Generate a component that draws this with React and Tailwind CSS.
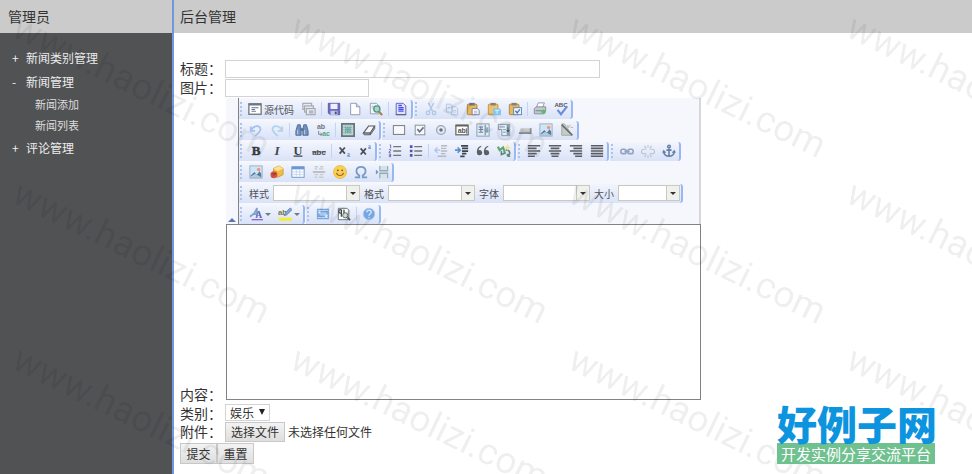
import React, { useState } from "react";

const icons = {
  source: (
    <>
      <rect x="1" y="2" width="14" height="12" fill="#fff" stroke="#70757f" strokeWidth="1.500" />
      <path d="M1 3h14" stroke="#70757f" strokeWidth="2" />
      <path d="M4 6.500h8M4 8.500h4M4 10.500h5" stroke="#69758f" strokeWidth="1.200" />
    </>
  ),
  templates: (
    <g fill="#e8eaf0" stroke="#a3a7b1" strokeWidth="1.300">
      <rect x="1" y="1.500" width="10" height="7" />
      <rect x="3" y="4.500" width="10" height="7" />
      <rect x="5" y="7.500" width="10" height="7" />
      <path d="M8 10.500h5M8 12.500h5" />
    </g>
  ),
  save: (
    <>
      <path d="M1.500 1.500h13v13h-11l-2-2z" fill="#6b6bc4" stroke="#5558a5" />
      <rect x="4" y="2" width="8" height="6" fill="#eef0ff" />
      <rect x="4" y="10" width="8" height="5" fill="#c6c9e2" />
      <rect x="9" y="11" width="2" height="3" fill="#44488c" />
    </>
  ),
  newPage: (
    <>
      <path d="M3 1.500h6.500l4 4v9H3z" fill="#fff" stroke="#8694a8" />
      <path d="M9.500 1.500v4h4" fill="#d4dced" stroke="#8694a8" />
    </>
  ),
  preview: (
    <>
      <path d="M1.500 1.500h7l3 3v9h-10z" fill="#f2f6fa" stroke="#8d9aad" />
      <path d="M3 5h5M3 7h4" stroke="#aab7c7" />
      <circle cx="9" cy="8" r="3.500" fill="#a6d9c5" stroke="#559581" strokeWidth="1.500" />
      <path d="m11.500 11 3.500 4" stroke="#aa8050" strokeWidth="2.500" />
    </>
  ),
  document: (
    <>
      <path d="M2.500 1.500h8l3 3v10h-11z" fill="#dfe2ff" stroke="#555aa8" />
      <path d="M5 4h4M5 6.500h6M5 8.500h6M5 10.500h6" stroke="#4851e5" strokeWidth="1.500" />
      <path d="M2 14.500h12" stroke="#555a70" />
    </>
  ),
  cut: (
    <g fill="none" stroke="#b4c8e5" strokeWidth="1.600">
      <path d="m5 1 5 10M11 1 6 11" />
      <circle cx="4.500" cy="12.500" r="2" />
      <circle cx="11.500" cy="12.500" r="2" />
    </g>
  ),
  copy: (
    <g fill="#e5edfb" stroke="#b0c5e4">
      <path d="M1.500 2.500h5l2 2v7h-7zM7.500 5.500h5l2 2v7h-7z" />
      <path d="M9 9.500h4M9 11.500h4M3 6.500h3" />
    </g>
  ),
  paste: (
    <>
      <rect x="1.500" y="2.500" width="11" height="12" rx="1" fill="#e9b85a" stroke="#ad7e3a" />
      <rect x="4" y="1" width="6" height="3" fill="#71737d" />
      <path d="M7 7.500h6l2 2v5H7z" fill="#fff" stroke="#6b7690" />
      <path d="M9 10.500h4M9 12.500h4" stroke="#9ba9c4" />
    </>
  ),
  pasteText: (
    <>
      <rect x="1.500" y="2.500" width="11" height="12" rx="1" fill="#efc16c" stroke="#c08c3b" />
      <rect x="4" y="1" width="6" height="3" fill="#8a8175" />
      <path d="M7 7h7l2 2v6H7z" fill="#82c7ec" />
      <path d="M9 9.500h5M11.500 9.500v4" stroke="#e9faff" />
    </>
  ),
  pasteWord: (
    <>
      <rect x="1.500" y="2.500" width="11" height="12" rx="1" fill="#e9b85a" stroke="#ad7e3a" />
      <rect x="4" y="1" width="6" height="3" fill="#8a8175" />
      <rect x="6.500" y="6.500" width="9" height="8" fill="#edf4ff" stroke="#5680b3" />
      <path d="m8.500 10 2 2.500 3-4" fill="none" stroke="#4777ae" strokeWidth="1.500" />
    </>
  ),
  print: (
    <>
      <path d="m4 6 2-5h7l-2 5" fill="#fff" stroke="#8893a4" />
      <path d="m1.500 7.500 2-2h11v5l-2 3h-11z" fill="#c1c8d0" stroke="#7f8993" />
      <path d="M3 10h9" stroke="#6f7a85" />
      <circle cx="12" cy="11" r="2.500" fill="#5cbd67" />
    </>
  ),
  spell: (
    <>
      <text x="8" y="6" textAnchor="middle" fontSize="7" fontWeight="700" fill="#53565d">ABC</text>
      <path d="m4 9 4 5 7-9" fill="none" stroke="#6c8fd8" strokeWidth="2.500" />
    </>
  ),
  undo: <path d="M2 4v5h5M2 9c3-7 12-7 11-1-1 3-4 5-6 7" fill="none" stroke="#a5c2ed" strokeWidth="2" />,
  redo: <path d="M14 4v5H9M14 9C11 2 2 2 3 8c1 3 4 5 6 7" fill="none" stroke="#b2d2ea" strokeWidth="2" />,
  find: (
    <>
      <path d="M3 2h3l1 5v7H1V9zM10 2h3l2 7v5H9V7z" fill="#738fbd" stroke="#4c6998" />
      <path d="M6 6h4v3H6z" fill="#54729e" />
      <path d="M3 8v5M11 8v5" stroke="#c4d5ee" />
    </>
  ),
  replace: (
    <>
      <text x="1" y="7" fontSize="8" fontWeight="700" fill="#74767f">ab</text>
      <text x="7" y="15" fontSize="8" fontWeight="700" fill="#58a873">ac</text>
      <path d="M3 9v4h4m-2-2 2 2-2 2" fill="none" stroke="#747d88" />
    </>
  ),
  selectAll: (
    <>
      <rect x="1" y="1" width="14" height="14" fill="#bfd5d3" stroke="#667578" strokeWidth="2" />
      <path d="M5 5h6v6H5z" fill="#75bfb6" />
      <path d="M3 5h10M3 8h10M3 11h10M5 3v10M8 3v10M11 3v10" stroke="#6a9291" strokeDasharray="1 1" />
    </>
  ),
  eraser: (
    <>
      <path d="m1.500 11.500 6-8h7l-5 8z" fill="#f7f7f7" stroke="#555b62" strokeWidth="1.200" />
      <path d="M1.500 11.500h8v2h-7zM9.500 11.500l5-8v3l-5 7z" fill="#a7aaae" stroke="#555b62" />
    </>
  ),
  form: <rect x="1.500" y="3" width="13" height="10" fill="#f8f8fb" stroke="#666d78" />,
  checkbox: (
    <>
      <rect x="2.500" y="2.500" width="11" height="11" fill="#f6f7fa" stroke="#7c8694" />
      <path d="m5 7 2.500 3L12 5" fill="none" stroke="#697179" strokeWidth="1.800" />
    </>
  ),
  radio: (
    <>
      <circle cx="8" cy="8" r="5" fill="#e5eaf2" stroke="#9ba5b3" strokeWidth="1.500" />
      <circle cx="8" cy="8" r="2" fill="#657080" />
    </>
  ),
  textField: (
    <>
      <rect x="1" y="2.500" width="14" height="11" fill="#fff" stroke="#6c6b68" strokeWidth="1.500" />
      <path d="M1 3h14" stroke="#62615f" strokeWidth="2" />
      <text x="3" y="11.500" fontSize="8" fontWeight="700" fill="#555">ab</text>
      <path d="M13 6v6" stroke="#555" />
    </>
  ),
  textarea: (
    <>
      <rect x="1" y="1" width="14" height="14" fill="#dfebf5" stroke="#8299aa" />
      <path d="M10.500 2v12M3 4.500h5M3 7.500h5M3 10.500h5M5.500 4v7" stroke="#6b8498" strokeWidth="1.200" />
      <path d="M11 5h3v6h-3z" fill="#8fabc1" />
    </>
  ),
  select: (
    <>
      <path d="M1.500 1.500h13v13h-9v-7h-4z" fill="#e4eff8" stroke="#73899d" />
      <path d="M3 4.500h6M7 7.500h3M7 10.500h3" stroke="#738798" />
      <path d="M11 2h3v12h-3z" fill="#879eb1" />
      <path d="M12.500 5v5m-1.500-1.500 1.500 1.500 1.500-1.500" stroke="#435d70" />
    </>
  ),
  button: (
    <>
      <path d="m1 11 2-5h12v5z" fill="#c6c8cb" />
      <path d="M1 11.500h13.500V6" fill="none" stroke="#8a8d90" strokeWidth="2" />
    </>
  ),
  image: (
    <>
      <rect x="1" y="1" width="14" height="14" fill="#cfe5fa" stroke="#9aaabd" />
      <circle cx="11" cy="5" r="2" fill="#ed9a73" />
      <path d="m2 12 4-4 3 3 3-4 2 3v4H2z" fill="#58799d" />
      <path d="m2 13 5-3 7 4H2z" fill="#b5cbdd" />
    </>
  ),
  hidden: (
    <>
      <path d="M2 1h3l9 13H2z" fill="#c7cbc7" stroke="#9ea39d" />
      <path d="m2 2 12 12" stroke="#626565" strokeWidth="1.800" />
      <path d="M9 2v3M12 5h3M12 2l-3 4" stroke="#a9adab" />
    </>
  ),
  bold: <text x="8" y="13" textAnchor="middle" fontFamily="Liberation Serif, serif" fontSize="15" fontWeight="700" fill="#36383e" stroke="#36383e" strokeWidth=".5">B</text>,
  italic: <text x="8" y="13" textAnchor="middle" fontFamily="Liberation Serif, serif" fontSize="15" fontWeight="700" fontStyle="italic" fill="#45474d">I</text>,
  underline: <text x="8" y="12" textAnchor="middle" fontFamily="Liberation Serif, serif" fontSize="14" fontWeight="700" textDecoration="underline" fill="#3e4046">U</text>,
  strike: (
    <>
      <text x="8" y="12" textAnchor="middle" fontSize="9" fontWeight="700" fill="#4a4c52">abc</text>
      <path d="M0 9h16" stroke="#4a4c52" />
    </>
  ),
  sub: (
    <>
      <path d="m3 4 6 7M9 4l-6 7" stroke="#4c4f56" strokeWidth="2" />
      <path d="M12 11h2v2h-2v1h3" fill="none" stroke="#638bd5" />
    </>
  ),
  sup: (
    <>
      <path d="m3 5 6 7M9 5l-6 7" stroke="#4c4f56" strokeWidth="2" />
      <path d="M12 2h2v2h-2v1h3" fill="none" stroke="#638bd5" />
    </>
  ),
  ol: (
    <>
      <path d="M6 3h9M6 8h9M6 13h9" stroke="#74767d" strokeWidth="1.500" />
      <path d="M2 1h1v4M1 6.500h2v1l-2 2h2M1 11.500h2v3H1M1 13h2" fill="none" stroke="#675ab1" />
    </>
  ),
  ul: (
    <>
      <path d="M6 3h9M6 8h9M6 13h9" stroke="#74767d" strokeWidth="1.500" />
      <path d="M1 1.500h3v3H1zM1 6.500h3v3H1zM1 11.500h3v3H1z" fill="#5054a8" />
    </>
  ),
  outdent: (
    <>
      <path d="M8 2h7M8 5h6M8 8h7M8 11h5M4 14h10" stroke="#b6b9c0" strokeWidth="1.500" />
      <path d="M7 7H2m2-3L1 7l3 3" fill="none" stroke="#a9c5e9" strokeWidth="1.500" />
    </>
  ),
  indent: (
    <>
      <path d="M7 2h8M8 5h7M8 8h7M8 11h5M6 14h5" stroke="#3e444d" strokeWidth="2" />
      <path d="M0 7h6M3 4l3 3-3 3" fill="none" stroke="#5a91ce" strokeWidth="2" />
    </>
  ),
  quote: (
    <g fill="#5c5f64">
      <path d="M6 2C2 3 1 6 1 10a3 3 0 1 0 2-3c0-2 1-3 3-4z" />
      <path d="M14 2c-4 1-5 4-5 8a3 3 0 1 0 2-3c0-2 1-3 3-4z" />
    </g>
  ),
  div: (
    <>
      <path d="m1 3 2 4 4-3 2 6" fill="none" stroke="#63a570" strokeWidth="2.500" />
      <path d="M5 8v4l5-2M10 7c5-1 6 5 2 7m0 0v-3m0 3h3" fill="none" stroke="#5b857e" strokeWidth="1.800" />
      <path d="m12 0 1 3 3 1-3 1-1 3-1-3-3-1 3-1z" fill="#f3df84" />
    </>
  ),
  left: <path d="M1 2h14M1 5h10M1 8h14M1 11h10M1 14h8" stroke="#5a5d63" strokeWidth="1.800" />,
  center: <path d="M1 2h14M3 5h10M1 8h14M3 11h10M4 14h8" stroke="#5a5d63" strokeWidth="1.800" />,
  right: <path d="M1 2h14M5 5h10M1 8h14M5 11h10M7 14h8" stroke="#5a5d63" strokeWidth="1.800" />,
  justify: <path d="M1 2h14M1 5h14M1 8h14M1 11h14M1 14h14" stroke="#5a5d63" strokeWidth="1.800" />,
  link: (
    <g fill="none" stroke="#8fa2bf" strokeWidth="1.800">
      <rect x="1" y="6" width="6" height="5" rx="2" />
      <rect x="9" y="6" width="6" height="5" rx="2" />
      <path d="M5 8.500h6" />
    </g>
  ),
  unlink: (
    <g fill="none" stroke="#bcc7d5" strokeWidth="1.400">
      <path d="M6 6H3a2.500 2.500 0 0 0 0 5h3M10 6h3a2.500 2.500 0 0 1 0 5h-3" />
      <path d="m4 2 2 3M8 1v3M12 2l-2 3M4 15l2-3M8 16v-3M12 15l-2-3" />
    </g>
  ),
  anchor: (
    <g fill="none" stroke="#6380a8" strokeWidth="1.800">
      <circle cx="8" cy="3" r="1.500" />
      <path d="M8 5v9M5 7h6M2 9c0 3 3 5 6 5s6-2 6-5M1 10l1-2 2 2M12 10l2-2 1 2" />
    </g>
  ),
  flash: (
    <>
      <path d="m4 4 6-3 5 3v7l-6 3-5-3z" fill="#f0bc43" stroke="#d39b45" />
      <path d="m4 4 5 3 6-3-5-3z" fill="#ffe28a" />
      <circle cx="4.500" cy="11" r="4" fill="#d45445" />
      <path d="M2 10h5M3 13l4-4" stroke="#8d332e" />
    </>
  ),
  table: (
    <>
      <rect x="1" y="2" width="14" height="12" fill="#fff" stroke="#658fc6" />
      <path d="M1 3.500h14" stroke="#6c98d5" strokeWidth="3" />
      <path d="M2 8h12M2 11h12M6 5v8M10 5v8" stroke="#bdd3ec" />
    </>
  ),
  hr: (
    <>
      <path d="M3 2h4M9 2h4M3 4.500h3M8 4.500h5M3 11h4M9 11h4M3 14h3M8 14h5" stroke="#c9cbce" strokeWidth="1.500" />
      <path d="M1 8h14" stroke="#a6aab0" strokeWidth="1.500" />
    </>
  ),
  smile: (
    <>
      <circle cx="8" cy="8" r="7.500" fill="#f9cf4f" stroke="#edb95a" />
      <circle cx="5.500" cy="6" r="1" fill="#6d5231" />
      <circle cx="10.500" cy="6" r="1" fill="#6d5231" />
      <path d="M4 9c1 4 7 4 8 0" fill="none" stroke="#97642e" strokeWidth="1.300" />
    </>
  ),
  omega: <path d="M1 14h5v-2C1 9 2 2 8 2s7 7 2 10v2h5" fill="none" stroke="#7498cb" strokeWidth="2" />,
  pageBreak: (
    <>
      <path d="M5.500 1v5.500h9V1M5.500 15V9.500h9V15" fill="#d5e2ea" stroke="#94a8b7" strokeWidth="1.300" />
      <path d="M5 8h10" stroke="#a5b3be" />
      <path d="m1 5 3 3-3 3z" fill="#6d97c8" />
    </>
  ),
  textColor: (
    <>
      <path d="M1 11C5 9 8 5 9 1v11M4 8h6" fill="none" stroke="#7aa2d6" strokeWidth="2" />
      <text x="7" y="12" fontFamily="Liberation Serif, serif" fontSize="11" fontWeight="700" fill="#6668a3">A</text>
      <path d="M3 14.500h13" stroke="#9362d1" strokeWidth="1.500" />
    </>
  ),
  highlight: (
    <>
      <text x="0" y="9" fontSize="9" fontWeight="700" fill="#77784f">ab</text>
      <path d="m7 10 2-4 5-5 2 2-6 6z" fill="#82a7d8" stroke="#6784a9" />
      <path d="M1 14h15" stroke="#f3ee37" strokeWidth="3.500" />
    </>
  ),
  maximize: (
    <>
      <rect x="1" y="2" width="14" height="12" fill="#76a8df" />
      <path d="M2 4h12M2 12h12" stroke="#c9e0f7" />
      <path d="M4 6h8v4H4z" fill="#b7d6f6" />
      <path d="M3 5h3L3 8zM13 11h-3l3-3z" fill="#fff" />
    </>
  ),
  blocks: (
    <>
      <path d="M1.500 1.500h10l2 2v11h-12z" fill="#fff" stroke="#61656a" />
      <path d="M5 3v8M8 3v7M5 3H4a2 2 0 0 0 0 4h1" fill="none" stroke="#474b50" strokeWidth="1.500" />
      <circle cx="9.500" cy="9.500" r="3" fill="#c4dbd2" stroke="#555e5e" />
      <path d="m12 12 3 3" stroke="#59504c" strokeWidth="2" />
    </>
  ),
  about: (
    <>
      <circle cx="8" cy="8" r="6.500" fill="#74a5e5" stroke="#a6c2e6" />
      <path d="M5.500 6c0-3 5-3 5 0 0 2-2.500 1.500-2.500 4M8 11.500v1" fill="none" stroke="#d3e6fb" strokeWidth="1.600" />
    </>
  ),
};

const toolbarRows = [
  [
    ["source:源代码", "templates:模板", "|", "save:保存", "newPage:新建", "preview:预览", "|", "document:模板文档"],
    ["cut:剪切", "copy:复制", "paste:粘贴", "pasteText:粘贴为文本", "pasteWord:从Word粘贴", "|", "print:打印", "spell:拼写检查"],
  ],
  [
    ["undo:撤销", "redo:重做", "|", "find:查找", "replace:替换", "|", "selectAll:全选", "eraser:清除格式"],
    ["form:表单", "checkbox:复选框", "radio:单选按钮", "textField:单行文本", "textarea:多行文本", "select:列表", "button:按钮", "image:图像按钮", "hidden:隐藏域"],
  ],
  [
    ["bold:加粗", "italic:倾斜", "underline:下划线", "strike:删除线", "|", "sub:下标", "sup:上标"],
    ["ol:编号列表", "ul:项目列表", "|", "outdent:减少缩进", "indent:增加缩进", "quote:引用", "div:DIV容器"],
    ["left:左对齐", "center:居中", "right:右对齐", "justify:两端对齐"],
    ["link:超链接", "unlink:取消链接", "anchor:锚点"],
  ],
  [["image:图像", "flash:Flash", "table:表格", "hr:水平线", "smile:表情", "omega:特殊符号", "pageBreak:分页符"]],
  "selects",
  [
    ["textColor:文本颜色", "highlight:背景颜色"],
    ["maximize:全屏", "blocks:显示区块", "|", "about:关于"],
  ],
];

const menu = [
  { name: "新闻类别管理", children: [] },
  { name: "新闻管理", open: true, children: ["新闻添加", "新闻列表"] },
  { name: "评论管理", children: [] },
];

const watermarks = Array.from({ length: 12 });

const Icon = ({ name }) => (
  <svg viewBox="0 0 16 16" className="w-[14px] h-[14px] shrink-0" fontFamily="Liberation Sans, sans-serif" aria-hidden="true">
    {icons[name]}
  </svg>
);

const ToolButton = ({ item }) => {
  const [name, label] = item.split(":");

  if (name === "source") {
    return (
      <button type="button" className="w-[53px] h-full pl-[3px] flex items-center gap-[2px] text-[10px] text-[#55575d]">
        <Icon name={name} />
        {label}
      </button>
    );
  }

  if (name === "textColor" || name === "highlight") {
    return (
      <button type="button" aria-label={label} className="w-[29px] h-full pl-1 flex items-center gap-[2px]">
        <Icon name={name} />
        <span className="border-x-[3px] border-t-[3px] border-x-transparent border-t-[#777a80]" />
      </button>
    );
  }

  return (
    <button type="button" aria-label={label} className="w-[21px] h-full flex items-center justify-center">
      <Icon name={name} />
    </button>
  );
};

const ToolGroup = ({ children }) => (
  <div className="h-[19px] mr-px flex items-center border-r-2 border-[#98b7f5] rounded-r-[3px] bg-linear-to-b from-[#f2f5fd] to-[#d9e2f7]">
    <span className="h-[14px] w-[6px] shrink-0 flex">
      <span className="ml-px border-l-2 border-dotted border-[#adc2ef]" />
    </span>
    {children}
  </div>
);

const ToolSelect = ({ id, label, small }) => (
  <>
    <label htmlFor={id} className="text-[10px] text-[#4e5056] whitespace-nowrap">{label}</label>
    <span className={small ? "relative w-[62px] h-4" : "relative w-[87px] h-4"}>
      <select id={id} className="block w-full h-full appearance-none bg-white border border-[#c9cabd]">
        <option></option>
      </select>
      <span className="absolute right-0 top-0 w-[14px] h-4 flex items-center justify-center bg-[#f0f0ed] border border-[#c9cabd] pointer-events-none">
        <span className="border-x-[3px] border-t-[3px] border-x-transparent border-t-[#333]" />
      </span>
    </span>
  </>
);

const Editor = () => (
  <div className="w-[475px] max-w-full ml-px">
    <div className="h-[126px] flex bg-[#f5f7fd] border-r-2 border-[#d8d8da]">
      <button type="button" aria-label="收起工具栏" className="w-3 shrink-0 pb-[2px] flex items-end justify-center">
        <span className="border-x-4 border-b-4 border-x-transparent border-b-[#5878b5]" />
      </button>
      <div className="flex-1 min-w-0 border-l border-[#818389]">
        {toolbarRows.map((groups, row) => (
          <div key={row} className="h-[21px] pt-px flex items-center">
            {groups === "selects" ? (
              <ToolGroup>
                <div className="pl-1 pr-px flex items-center gap-1">
                  <ToolSelect id="style" label="样式" />
                  <ToolSelect id="format" label="格式" />
                  <ToolSelect id="font" label="字体" />
                  <ToolSelect id="size" label="大小" small />
                </div>
              </ToolGroup>
            ) : (
              groups.map((items, index) => (
                <ToolGroup key={index}>
                  {items.map((item, i) =>
                    item === "|" ? (
                      <span key={i} className="w-1 h-[14px] flex justify-center">
                        <span className="border-l border-[#c3d3f3]" />
                      </span>
                    ) : (
                      <ToolButton key={i} item={item} />
                    )
                  )}
                </ToolGroup>
              ))
            )}
          </div>
        ))}
      </div>
    </div>
    <textarea id="content" className="block w-full h-[176px] resize-none bg-white border border-[#808285] outline-none" />
  </div>
);

const Sidebar = () => (
  <aside className="w-[174px] shrink-0 bg-[#515254] border-r-2 border-[#7198dc]">
    <h2 className="h-[33px] pl-2 flex items-center bg-[#cbcbcb] text-[14px] text-[#333]">管理员</h2>
    <ul className="pt-[13px] text-[12px] text-[#ededed]">
      {menu.map((item) => (
        <li key={item.name}>
          <a href="#" className="h-6 pl-3 flex items-center">
            <span className="w-[14px]">{item.open ? "-" : "+"}</span>
            {item.name}
          </a>
          {item.children.length > 0 && (
            <ul className="pl-[35px] text-[11px] leading-[21px] text-[#dedede]">
              {item.children.map((child) => (
                <li key={child}>
                  <a href="#">{child}</a>
                </li>
              ))}
            </ul>
          )}
        </li>
      ))}
    </ul>
  </aside>
);

const NewsForm = () => {
  const [fileName, setFileName] = useState("");

  return (
    <form className="pt-[27px] pl-[6px] flex flex-col gap-px text-[14px]" onSubmit={(e) => e.preventDefault()}>
      <div className="h-[18px] flex items-center gap-[3px]">
        <label htmlFor="title" className="w-[42px] shrink-0 pb-[2px]">标题：</label>
        <input id="title" type="text" className="w-[375px] h-full px-1 text-[12px] bg-white border border-[#d3d3d3] outline-none" />
      </div>
      <div className="h-[18px] flex items-center gap-[3px]">
        <label htmlFor="picture" className="w-[42px] shrink-0 pb-[2px]">图片：</label>
        <input id="picture" type="text" className="w-[144px] h-full px-1 text-[12px] bg-white border border-[#d3d3d3] outline-none" />
      </div>
      <div className="flex items-end gap-[3px]">
        <label htmlFor="content" className="w-[42px] shrink-0 pb-[2px] leading-[8px]">内容：</label>
        <Editor />
      </div>
      <div className="h-5 flex items-end gap-[3px]">
        <label htmlFor="category" className="w-[42px] shrink-0 leading-[16px]">类别：</label>
        <span className="relative h-[17px]">
          <select id="category" className="block w-[45px] h-full pl-1 appearance-none bg-white border border-[#d3d3d3] text-[12px] leading-[15px]">
            <option>娱乐</option>
          </select>
          <span className="absolute right-[5px] top-[5px] border-x-[3px] border-t-[6px] border-x-transparent border-t-[#222] pointer-events-none" />
        </span>
      </div>
      <div className="h-5 flex items-center gap-[3px]">
        <span className="w-[42px] shrink-0 pb-[2px]">附件：</span>
        <input id="attachment" type="file" className="sr-only" onChange={(e) => setFileName(e.target.files[0]?.name || "")} />
        <label htmlFor="attachment" className="w-[60px] h-full flex items-center justify-center border border-[#c8c8c8] bg-linear-to-b from-[#f3f3f3] to-[#dedede] text-[12px]">
          选择文件
        </label>
        <span className="text-[12px]">{fileName || "未选择任何文件"}</span>
      </div>
      <div className="h-[21px] flex text-[12px]">
        <button type="submit" className="w-[37px] border border-[#c8c8c8] bg-linear-to-b from-[#f3f3f3] to-[#dedede]">提交</button>
        <button type="reset" className="w-[37px] border border-[#c8c8c8] bg-linear-to-b from-[#f3f3f3] to-[#dedede]">重置</button>
      </div>
    </form>
  );
};

const App = () => {
  return (
    <div className="relative min-h-screen flex overflow-hidden bg-white text-[#333] font-['Noto_Sans_CJK_SC',sans-serif]">
      <Sidebar />
      <main className="flex-1 min-w-0">
        <h1 className="h-[33px] pl-[6px] flex items-center bg-[#cbcbcb] text-[14px]">后台管理</h1>
        <NewsForm />
      </main>

      <div className="absolute inset-0 pt-[7px] pl-[24px] grid grid-cols-[repeat(4,278px)] auto-rows-[166px] content-start pointer-events-none select-none" aria-hidden="true">
        {watermarks.map((_, index) => (
          <span key={index} className="w-max h-10 leading-10 origin-top-left rotate-[26deg] font-[Roboto] text-[37px] text-black/8">
            www.haolizi.com
          </span>
        ))}
      </div>

      <a href="#" className="absolute right-[37px] bottom-[10px] w-[158px] whitespace-nowrap">
        <strong className="block text-[40px] leading-10 font-black text-[#0c94df]">好例子网</strong>
        <span className="h-[21px] flex justify-center bg-[#6fc18f] text-[15px] leading-[21px] text-white">开发实例分享交流平台</span>
      </a>
    </div>
  );
};

export default App;
